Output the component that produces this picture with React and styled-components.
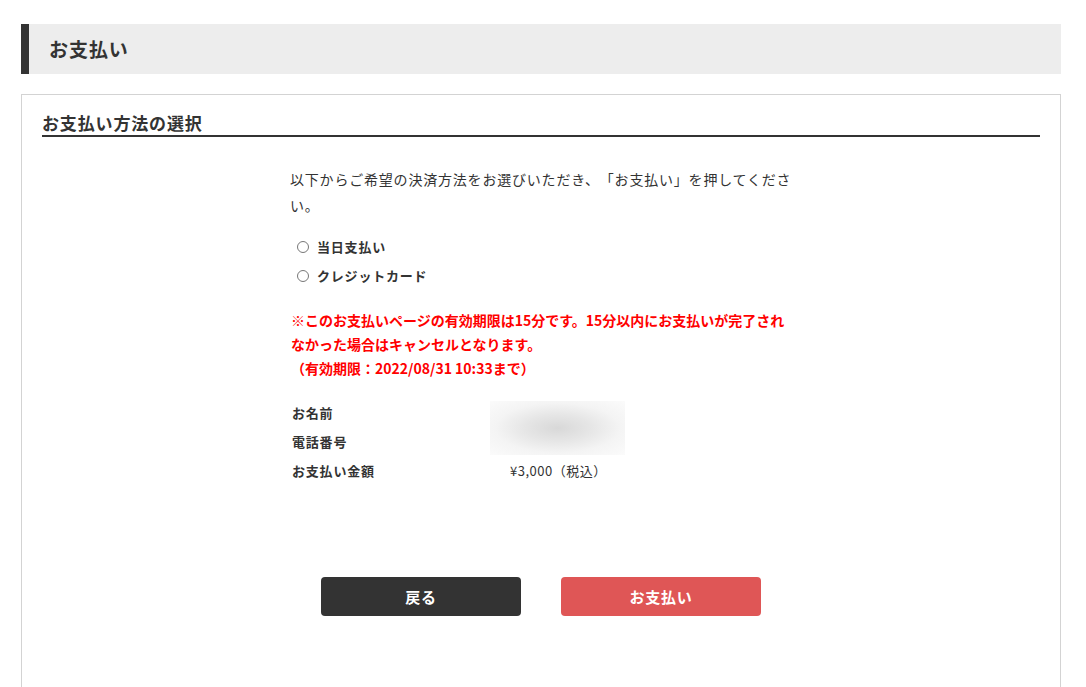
import React from "react";
import styled, { createGlobalStyle } from "styled-components";

const Global = createGlobalStyle`
  html, body { margin: 0; padding: 0; background: #fff; }
  body {
    font-family: "Noto Sans CJK JP", "Noto Sans", sans-serif;
    color: #333;
    -webkit-font-smoothing: antialiased;
    text-spacing-trim: space-all;
  }
`;

const Page = styled.div`
  padding: 24px 25px 0 21px;
`;

const PageHeader = styled.h1`
  margin: 0;
  height: 50px;
  line-height: 50px;
  background: #ededed;
  border-left: 8px solid #333;
  padding-left: 20px;
  font-size: 19px;
  font-weight: 700;
  letter-spacing: 0.05em;
  color: #333;
`;

const Card = styled.section`
  margin-top: 20px;
  border: 1px solid #d3d3d3;
  padding: 16px 20px 0;
  min-height: 620px;
`;

const SectionTitle = styled.h2`
  margin: 0;
  font-size: 17px;
  line-height: 24px;
  font-weight: 700;
  letter-spacing: 0.05em;
  border-bottom: 2px solid #333;
  color: #333;
`;

const Content = styled.div`
  width: 506px;
  margin-left: 248px;
  padding-top: 29px;
  font-size: 14px;
  letter-spacing: 0.8px;
  text-spacing-trim: space-all;
`;

const Intro = styled.p`
  margin: 0;
  line-height: 26px;
`;

const RadioList = styled.div`
  margin-top: 14px;
  display: flex;
  flex-direction: column;
`;

const RadioRow = styled.label`
  display: flex;
  align-items: center;
  height: 29px;
  font-size: 13px;
  font-weight: 700;
  cursor: pointer;
`;

const Radio = styled.input.attrs({ type: "radio" })`
  appearance: none;
  width: 12px;
  height: 12px;
  margin: 0 8px 0 7px;
  border: 1px solid #777;
  border-radius: 50%;
  background: #fff;
  box-sizing: border-box;
`;

const Notice = styled.p`
  margin: 18px 0 0;
  color: #ff0000;
  font-weight: 700;
  line-height: 24px;
  letter-spacing: 0;
  padding-left: 1px;
`;

const InfoTable = styled.div`
  position: relative;
  margin-top: 18px;
  display: grid;
  grid-template-columns: 220px 1fr;
  grid-auto-rows: 29px;
  align-items: center;
  font-size: 13px;
`;

const Label = styled.div`
  font-weight: 700;
  padding-left: 2px;
`;

const Value = styled.div`
  font-weight: 400;
  letter-spacing: 0.5px;
`;

const Redaction = styled.div`
  position: absolute;
  left: 200px;
  top: 3px;
  width: 135px;
  height: 54px;
  background: radial-gradient(ellipse at center, #d8d8d8 0%, #e6e6e6 35%, #f4f4f4 65%, #fbfbfb 100%);
`;

const Buttons = styled.div`
  display: flex;
  justify-content: center;
  gap: 40px;
  margin-top: 92px;
`;

const Button = styled.button`
  width: 200px;
  height: 39px;
  border: none;
  border-radius: 4px;
  background: ${(p) => (p.$primary ? "#df5656" : "#333")};
  color: #fff;
  font-family: inherit;
  font-size: 15px;
  font-weight: 700;
  letter-spacing: 0.05em;
  cursor: pointer;
`;

export default function App() {
  return (
    <>
      <Global />
      <Page>
        <PageHeader>お支払い</PageHeader>
        <Card>
          <SectionTitle>お支払い方法の選択</SectionTitle>
          <Content>
            <Intro>
              以下からご希望の決済方法をお選びいただき、「お支払い」を押してください。
            </Intro>
            <RadioList>
              <RadioRow>
                <Radio name="pay" />
                当日支払い
              </RadioRow>
              <RadioRow>
                <Radio name="pay" />
                クレジットカード
              </RadioRow>
            </RadioList>
            <Notice>
              ※このお支払いページの有効期限は15分です。15分以内にお支払いが完了されなかった場合はキャンセルとなります。
              <br />
              （有効期限：2022/08/31 10:33まで）
            </Notice>
            <InfoTable>
              <Label>お名前</Label>
              <Value></Value>
              <Label>電話番号</Label>
              <Value></Value>
              <Label>お支払い金額</Label>
              <Value>¥3,000（税込）</Value>
              <Redaction />
            </InfoTable>
          </Content>
          <Buttons>
            <Button>戻る</Button>
            <Button $primary>お支払い</Button>
          </Buttons>
        </Card>
      </Page>
    </>
  );
}
